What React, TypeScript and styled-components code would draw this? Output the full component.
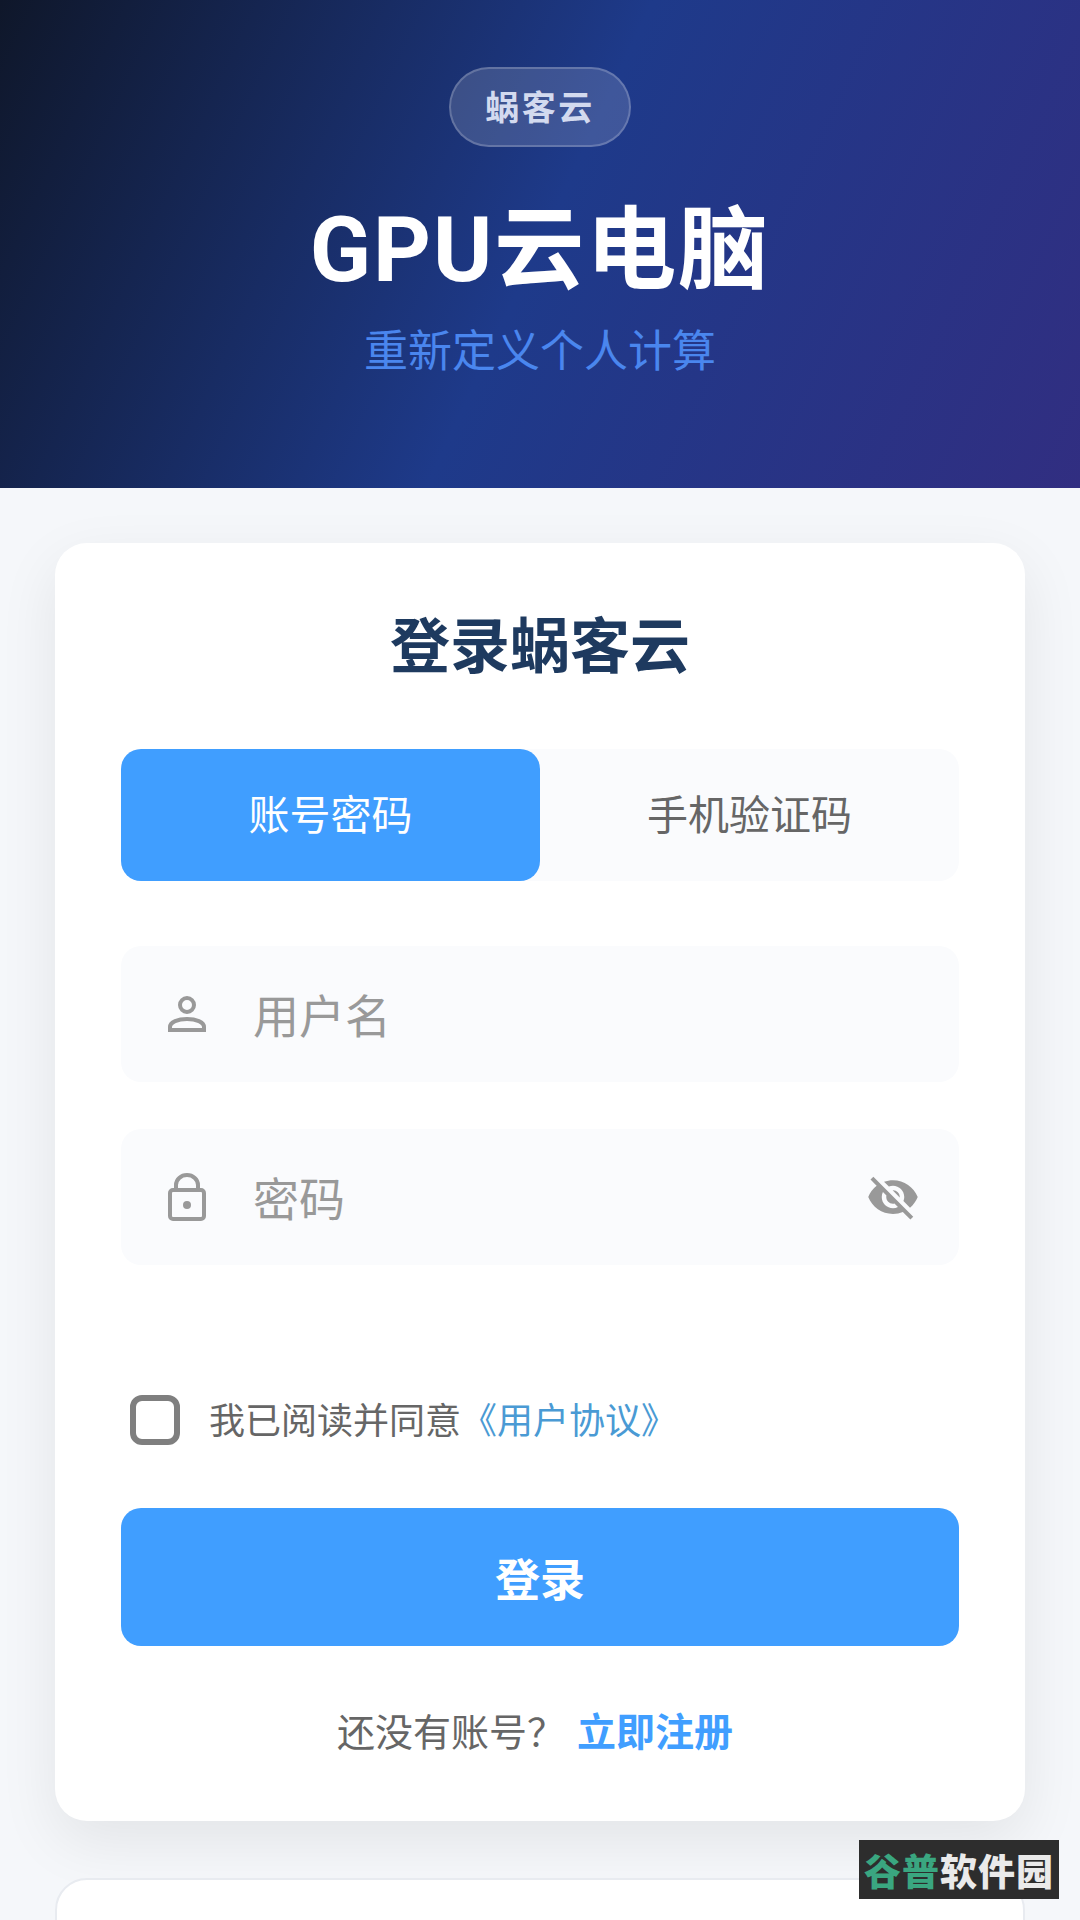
import React from "react";
import styled, { createGlobalStyle } from "styled-components";
import { MdVisibilityOff } from "react-icons/md";

const GlobalStyle = createGlobalStyle`
  html, body {
    margin: 0;
    padding: 0;
    background: #f5f7fa;
  }
  * {
    box-sizing: border-box;
  }
`;

const sans = `Roboto, "Noto Sans CJK SC", sans-serif`;

const UserIcon = () => (
  <svg width="38" height="36" viewBox="0 0 38 36" fill="none" stroke="#999" strokeWidth="4">
    <circle cx="19" cy="9" r="7" />
    <path d="M2 34v-3c0-5 8-8 17-8s17 3 17 8v3z" />
  </svg>
);

const LockIcon = () => (
  <svg width="38" height="48" viewBox="0 0 38 48" fill="none" stroke="#999" strokeWidth="4">
    <path d="M8 17v-5a11 10 0 0 1 22 0v5" />
    <rect x="2" y="17" width="34" height="29" rx="3" />
    <circle cx="19" cy="32" r="4" fill="#999" stroke="none" />
  </svg>
);

export default function App() {
  return (
    <Page>
      <GlobalStyle />
      <Hero>
        <Badge>蜗客云</Badge>
        <Title>GPU云电脑</Title>
        <Subtitle>重新定义个人计算</Subtitle>
      </Hero>
      <Card>
        <CardTitle>登录蜗客云</CardTitle>
        <Tabs>
          <Tab $active>账号密码</Tab>
          <Tab>手机验证码</Tab>
        </Tabs>
        <Fields>
          <Field>
            <FieldIcon>
              <UserIcon />
            </FieldIcon>
            <Placeholder>用户名</Placeholder>
          </Field>
          <Field>
            <FieldIcon>
              <LockIcon />
            </FieldIcon>
            <Placeholder>密码</Placeholder>
            <EyeButton>
              <MdVisibilityOff size={54} color="#999" />
            </EyeButton>
          </Field>
        </Fields>
        <Agreement>
          <CheckBox />
          <AgreementText>
            我已阅读并同意<AgreementLink>《用户协议》</AgreementLink>
          </AgreementText>
        </Agreement>
        <LoginButton>登录</LoginButton>
        <RegisterRow>
          还没有账号？<RegisterLink>立即注册</RegisterLink>
        </RegisterRow>
      </Card>
      <NextCard />
      <Watermark>
        <WatermarkGreen>谷普</WatermarkGreen>
        软件园
      </Watermark>
    </Page>
  );
}

const Page = styled.div`
  position: relative;
  height: 1920px;
  overflow: hidden;
  background: #f5f7fa;
  font-family: ${sans};
`;

const Hero = styled.header`
  height: 488px;
  padding-top: 67px;
  display: flex;
  flex-direction: column;
  align-items: center;
  background: linear-gradient(115deg, #0f172a 0%, #1e3a8a 50%, #312e81 100%);
`;

const Badge = styled.div`
  width: 182px;
  height: 80px;
  padding-bottom: 3px;
  display: flex;
  align-items: center;
  justify-content: center;
  border-radius: 40px;
  border: 2px solid rgba(255, 255, 255, 0.2);
  background: rgba(255, 255, 255, 0.15);
  color: #d3daef;
  font-size: 34px;
  font-weight: 700;
  letter-spacing: 2.5px;
`;

const Title = styled.h1`
  margin: 49px 0 0;
  color: #fff;
  font-size: 90px;
  line-height: 110px;
  font-weight: 700;
  letter-spacing: 2px;
`;

const Subtitle = styled.p`
  margin: 16px 0 0;
  color: #4a86ee;
  font-size: 44px;
  line-height: 60px;
`;

const Card = styled.main`
  height: 1278px;
  margin: 55px 55px 0;
  padding: 63px 66px 0;
  border-radius: 32px;
  background: #fff;
  box-shadow: 0 20px 60px rgba(0, 0, 0, 0.08);
`;

const CardTitle = styled.h2`
  margin: 0;
  color: #1e3a5f;
  font-size: 60px;
  line-height: 84px;
  font-weight: 700;
  text-align: center;
`;

const Tabs = styled.div`
  display: grid;
  grid-template-columns: 1fr 1fr;
  height: 132px;
  margin-top: 59px;
  border-radius: 20px;
  background: #fafbfd;
`;

const Tab = styled.div<{ $active?: boolean }>`
  display: flex;
  align-items: center;
  justify-content: center;
  padding-bottom: 6px;
  border-radius: 20px;
  font-size: 41px;
  background: ${(props) => (props.$active ? "#409eff" : "transparent")};
  color: ${(props) => (props.$active ? "#fff" : "#666")};
`;

const Fields = styled.div`
  display: flex;
  flex-direction: column;
  gap: 47px;
  margin-top: 65px;
`;

const Field = styled.div`
  display: flex;
  align-items: center;
  height: 136px;
  padding: 0 39px 0 47px;
  border-radius: 20px;
  background: #fafbfd;
`;

const FieldIcon = styled.span`
  display: flex;
  width: 38px;
  margin-right: 47px;
`;

const Placeholder = styled.span`
  flex: 1;
  padding-bottom: 3px;
  color: #999;
  font-size: 46px;
`;

const EyeButton = styled.span`
  display: flex;
`;

const Agreement = styled.div`
  display: flex;
  align-items: center;
  margin-top: 127px;
  padding-left: 9px;
`;

const CheckBox = styled.span`
  width: 50px;
  height: 50px;
  border: 6px solid #7f7f7f;
  border-radius: 12px;
`;

const AgreementText = styled.span`
  margin-left: 29px;
  padding-bottom: 4px;
  color: #666;
  font-size: 36px;
`;

const AgreementLink = styled.span`
  color: #4a9ad4;
`;

const LoginButton = styled.button`
  display: block;
  width: 100%;
  height: 138px;
  margin-top: 60px;
  border: 0;
  border-radius: 20px;
  background: #409eff;
  color: #fff;
  font-family: inherit;
  font-size: 45px;
  font-weight: 700;
`;

const RegisterRow = styled.div`
  margin-top: 61px;
  padding-right: 10px;
  color: #666;
  font-size: 38px;
  line-height: 52px;
  text-align: center;
`;

const RegisterLink = styled.span`
  margin-left: 12px;
  color: #409eff;
  font-size: 39px;
  font-weight: 700;
`;

const NextCard = styled.section`
  height: 300px;
  margin: 57px 55px 0;
  border: 2px solid #e8ebf0;
  border-radius: 32px;
  background: #fff;
`;

const Watermark = styled.div`
  position: absolute;
  left: 859px;
  top: 1840px;
  width: 200px;
  height: 59px;
  display: flex;
  align-items: center;
  justify-content: center;
  background: #2d2d2d;
  color: #eaeaea;
  font-size: 37px;
  font-weight: 900;
  letter-spacing: 1px;
`;

const WatermarkGreen = styled.span`
  color: #3aa680;
`;
